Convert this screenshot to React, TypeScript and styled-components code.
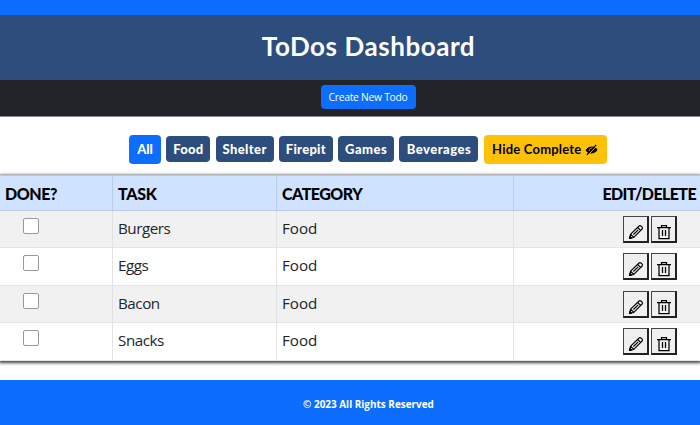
import React from "react";
import styled, { createGlobalStyle } from "styled-components";

const Global = createGlobalStyle`
  * { box-sizing: border-box; }
  body { margin: 0; background: #fff; overflow: hidden; font-family: "Open Sans", "Noto Sans", sans-serif; color: #212529; }
`;
const display = `font-family: Lato, sans-serif; font-weight: 900;`;

const Page = styled.div`
  width: 700px;
  height: 425px;
  display: flex;
  flex-direction: column;
  overflow: hidden;
`;
const TopStrip = styled.div`
  height: 15px;
  background: #0d6efd;
`;
const Header = styled.header`
  height: 65px;
  padding: 0 0 4px 37px;
  background: #2d4d7c;
  color: #fff;
  display: flex;
  align-items: center;
  justify-content: center;
`;
const Title = styled.h1`
  ${display}
  margin: 0;
  font-size: 26px;
  font-weight: 700;
  line-height: 32px;
  white-space: nowrap;
  letter-spacing: 0.55px;
`;
const Toolbar = styled.nav`
  height: 37px;
  padding: 5px 0 0 36px;
  background: #212529;
  border-bottom: 1px solid #8b8d8f;
  display: flex;
  justify-content: center;
  align-items: flex-start;
`;
const CreateButton = styled.button`
  width: 95px;
  height: 24px;
  padding: 0 0 1px;
  border: 0;
  border-radius: 4px;
  background: #0d6efd;
  color: #fff;
  font: 10.3px "Open Sans", sans-serif;
  letter-spacing: -0.25px;
  white-space: nowrap;
`;
const Filters = styled.div`
  height: 58px;
  padding: 6px 0 0 129px;
  display: flex;
  align-items: center;
  gap: 5.3px;
`;
const Filter = styled.button<{ $w: number; $tone?: "active" | "warning"; $ls?: number }>`
  ${display}
  width: ${(p) => p.$w}px;
  height: ${(p) => (p.$tone ? 29 : 26)}px;
  padding: 0 0 1px;
  border: 0;
  border-radius: 4px;
  flex: none;
  display: flex;
  align-items: center;
  justify-content: center;
  gap: 4px;
  font-size: 13px;
  letter-spacing: ${(p) => p.$ls ?? 0}px;
  white-space: nowrap;
  background: ${(p) => (p.$tone === "active" ? "#0d6efd" : p.$tone === "warning" ? "#ffc107" : "#2d4d7c")};
  color: ${(p) => (p.$tone === "warning" ? "#000" : "#fff")};
  font-weight: ${(p) => (p.$tone === "warning" ? 700 : 900)};
  svg { position: relative; top: 1px; }
`;
const Table = styled.section`
  height: 185.5px;
  border-top: 1px solid #c4c6c9;
  box-shadow: 0 1px 3px 1px rgba(0, 0, 0, 0.75);
  background: #fff;
  flex: none;
`;
const Row = styled.div<{ $shade?: boolean }>`
  display: grid;
  grid-template-columns: 113px 164px 236.5px 186.5px;
  height: 37.5px;
  background: ${(p) => (p.$shade ? "#f1f1f1" : "#fff")};
`;
const HeadRow = styled(Row)`
  height: 34.5px;
  background: #cfe2ff;
`;
const Cell = styled.div<{ $last?: boolean; $ls?: number }>`
  border-right: ${(p) => (p.$last ? 0 : 1)}px solid #dfe2e6;
  border-bottom: 1px solid #e1e4e8;
  padding: 0 0 2px 5px;
  display: flex;
  align-items: center;
  font-size: 15.2px;
  letter-spacing: ${(p) => p.$ls ?? 0}px;
  white-space: nowrap;
`;
const HeadCell = styled(Cell)`
  ${display}
  border-color: #bacbe6;
  padding: 1px 4px 0 5px;
  color: #000;
  font-size: 16px;
  justify-content: ${(p) => (p.$last ? "flex-end" : "flex-start")};
`;
const CheckCell = styled(Cell)`
  align-items: flex-start;
  padding: 7px 0 0 23px;
`;
const Check = styled.input`
  appearance: none;
  margin: 0;
  width: 16px;
  height: 16px;
  border: 1px solid #989898;
  border-radius: 2px;
  background: #fff;
`;
const Actions = styled(Cell)`
  padding: 5px 0 0 109px;
  align-items: flex-start;
  gap: 2px;
`;
const ActionButton = styled.button`
  width: 26px;
  height: 27px;
  padding: 6px 0 0 1px;
  border: 1px solid #444;
  border-right: 2px solid #222;
  border-bottom: 2px solid #222;
  background: #f0f0f0;
  color: #000;
  display: flex;
  align-items: center;
  justify-content: center;
`;
const Footer = styled.footer`
  height: 45px;
  margin-top: 19.5px;
  padding: 3px 0 0 37px;
  background: #0d6efd;
  color: #fff;
  display: flex;
  align-items: center;
  justify-content: center;
  font-size: 9.95px;
  font-weight: 700;
`;

const Pencil = () => (
  <svg width="16" height="16" viewBox="0 0 16 16" fill="none" stroke="currentColor" strokeWidth="1.15" strokeLinejoin="round">
    <path d="M1.5 14.5l1.1-4.3L11.1 2q.9-.9 1.8 0l1.2 1.2q.9.9 0 1.8L5.8 13.4zM2.6 10.2l3.2 3.2M9.6 3.4l3 3.1M5.4 10.5l4.8-4.7" />
    <path d="M1.5 14.5l.5-2 1.5 1.5z" fill="currentColor" />
  </svg>
);
const Trash = () => (
  <svg width="16" height="16" viewBox="0 0 16 16" fill="none" stroke="currentColor" strokeWidth="1.25">
    <path d="M1 3.5h14M5.5 3.5v-2h5v2M3 3.5v11h10v-11M6.5 6v6M9.5 6v6" />
  </svg>
);
const EyeOff = () => (
  <svg width="13" height="12" viewBox="0 0 13 12">
    <path d="M.5 6.2C3 1.8 9.5.8 12.5 5.8 10 10.4 3.5 11.2.5 6.2z" fill="#000" />
    <path d="M4.3 7.4C3.7 4.8 6 3.5 7.8 4.2" fill="none" stroke="#ffc107" strokeWidth=".8" />
    <path d="M3 11.2L12 1.5" stroke="#ffc107" strokeWidth="1" />
    <path d="M1.9 10.9L11.2.9" stroke="#000" strokeWidth="1.2" />
  </svg>
);

const filters = [
  { name: "Food", w: 44, ls: 0.2 },
  { name: "Shelter", w: 58, ls: 0.4 },
  { name: "Firepit", w: 54, ls: 0.3 },
  { name: "Games", w: 56, ls: 0.5 },
  { name: "Beverages", w: 79, ls: 0.5 },
];
const tasks = ["Burgers", "Eggs", "Bacon", "Snacks"];

export default function App() {
  return (
    <Page>
      <Global />
      <TopStrip />
      <Header><Title>ToDos Dashboard</Title></Header>
      <Toolbar><CreateButton>Create New Todo</CreateButton></Toolbar>
      <Filters>
        <Filter $w={32} $tone="active">All</Filter>
        {filters.map((f) => <Filter key={f.name} $w={f.w} $ls={f.ls}>{f.name}</Filter>)}
        <Filter $w={123} $tone="warning" $ls={0.2}>Hide Complete <EyeOff /></Filter>
      </Filters>
      <Table>
        <HeadRow>
          <HeadCell $ls={-0.4}>DONE?</HeadCell>
          <HeadCell $ls={-0.3}>TASK</HeadCell>
          <HeadCell $ls={-0.5}>CATEGORY</HeadCell>
          <HeadCell $ls={-0.6} $last>EDIT/DELETE</HeadCell>
        </HeadRow>
        {tasks.map((task, i) => (
          <Row key={task} $shade={i % 2 === 0}>
            <CheckCell><Check type="checkbox" aria-label={task} /></CheckCell>
            <Cell $ls={-0.45}>{task}</Cell>
            <Cell>Food</Cell>
            <Actions $last>
              <ActionButton aria-label="Edit"><Pencil /></ActionButton>
              <ActionButton aria-label="Delete"><Trash /></ActionButton>
            </Actions>
          </Row>
        ))}
      </Table>
      <Footer>© 2023 All Rights Reserved</Footer>
    </Page>
  );
}
